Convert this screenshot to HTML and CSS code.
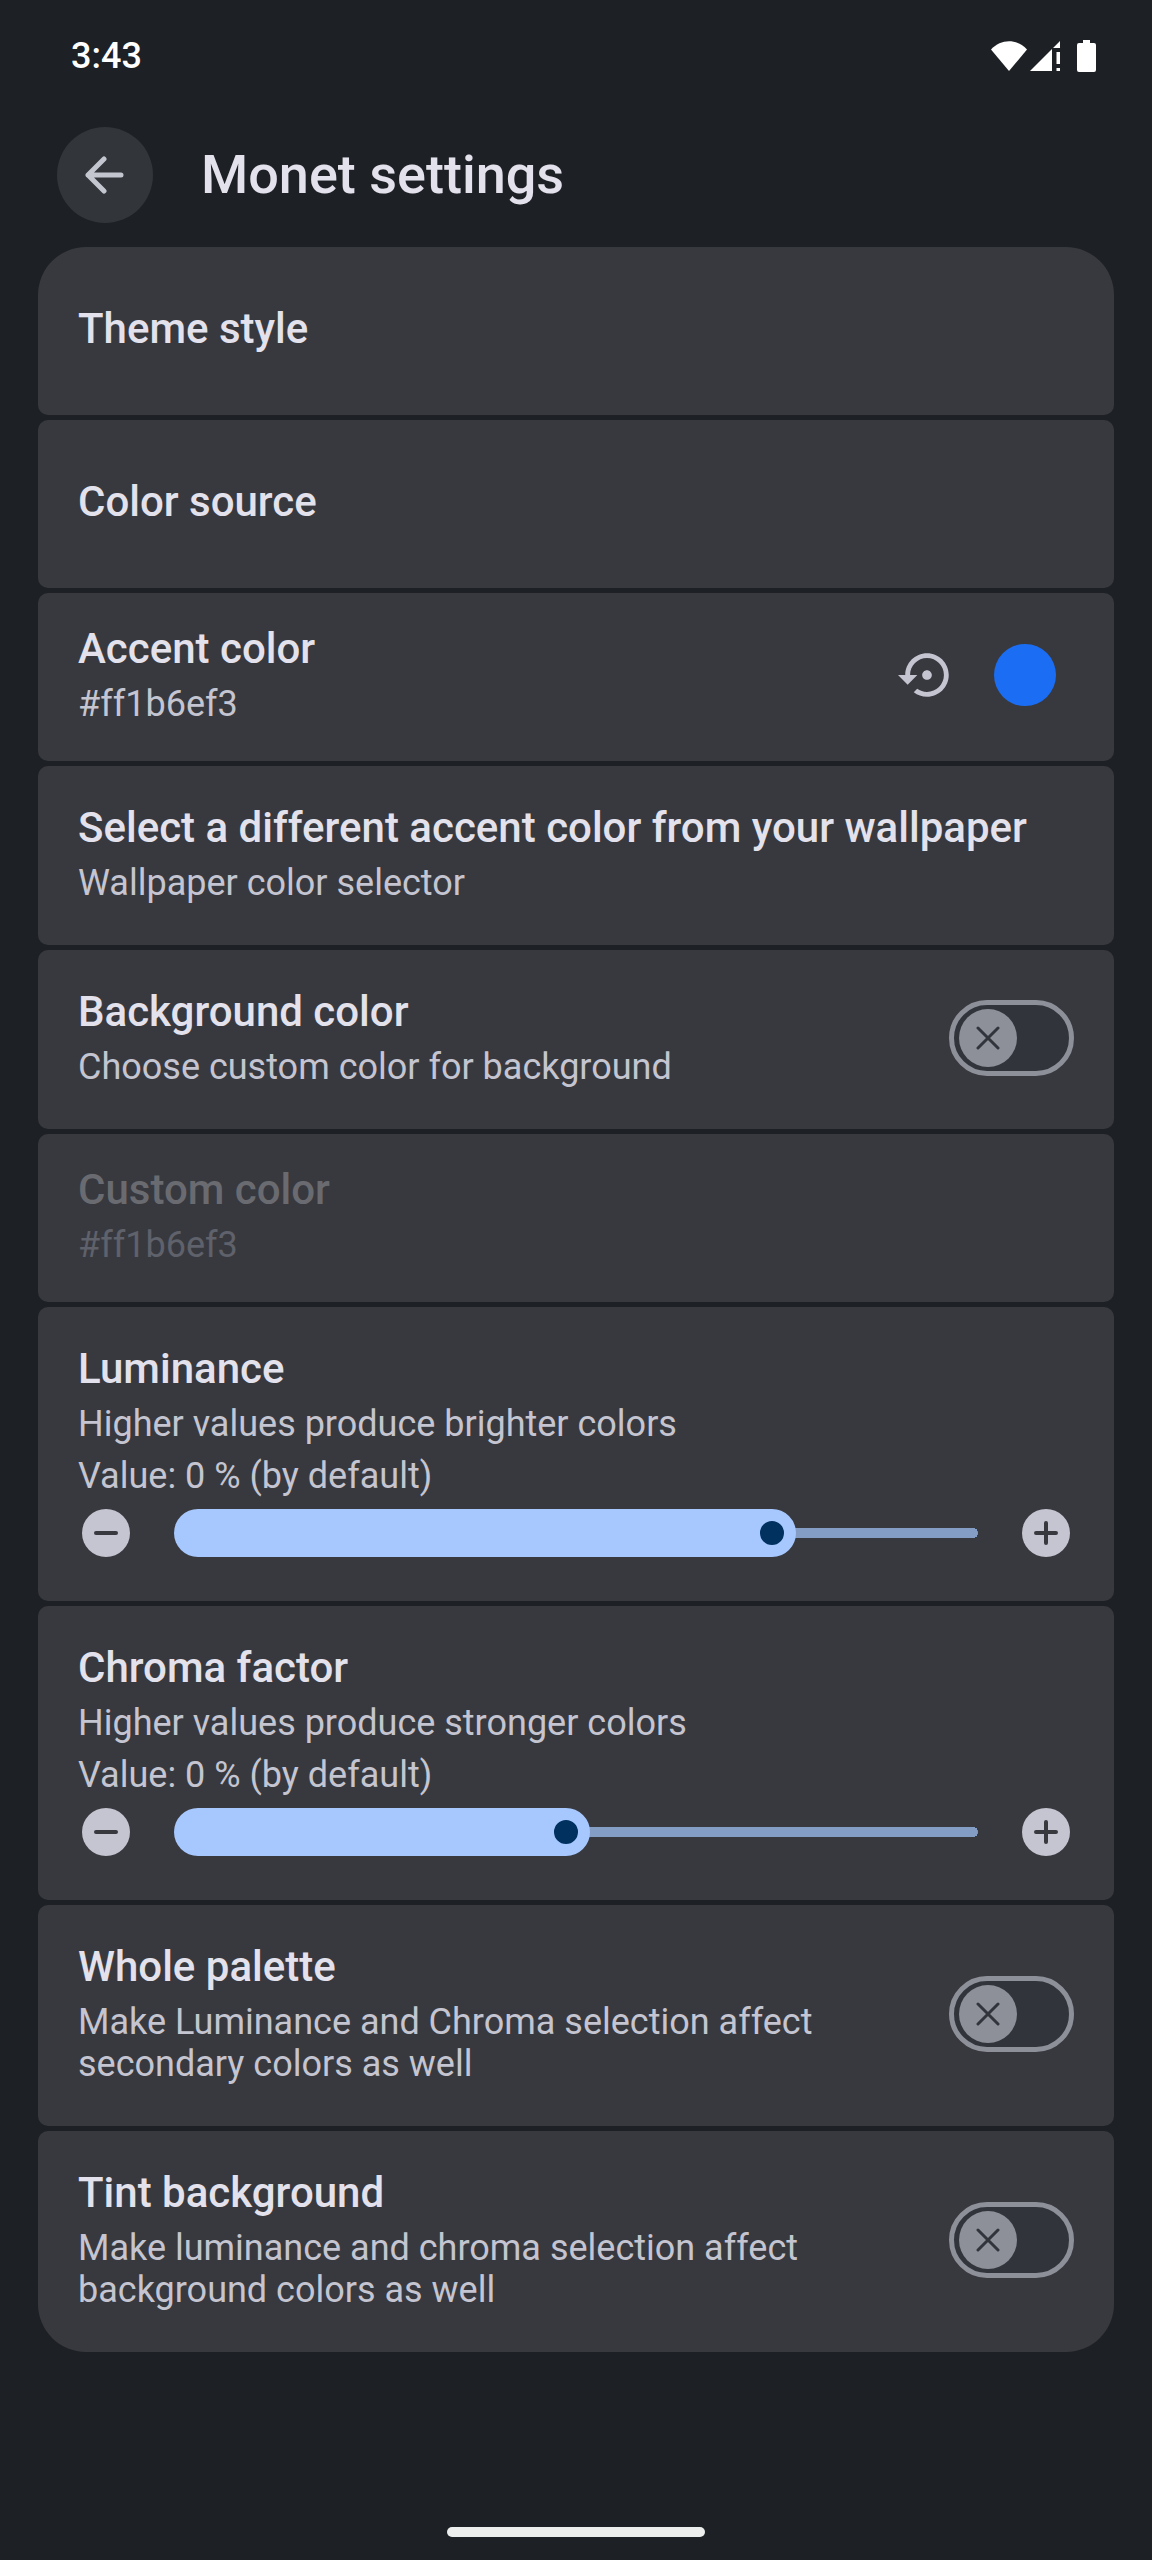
FILE: index.html
```html
<!DOCTYPE html>
<html lang="en">
<head>
<meta charset="utf-8">
<meta name="viewport" content="width=device-width, initial-scale=1">
<title>Monet settings</title>
<link rel="stylesheet" href="styles.css">
</head>
<body>
<div class="screen">
  <div class="status-bar">
    <time class="clock">3:43</time>
    <div class="status-icons">
      <svg width="36" height="30" viewBox="0 0 36 30" aria-hidden="true"><path d="M0 8.500C10-2.500 26-2.500 36 8.500L18 30Z"/></svg>
      <svg class="signal" width="30" height="30" viewBox="0 0 30 30" aria-hidden="true"><path d="M0 30L22 8V30ZM23 7L30 0V7ZM26.500 11H30V23H26.500ZM26.500 27H30V30H26.500Z"/></svg>
      <svg width="19" height="32" viewBox="0 0 19 32" aria-hidden="true"><path d="M6 0H13V3H17Q19 3 19 5V30Q19 32 17 32H2Q0 32 0 30V5Q0 3 2 3H6Z"/></svg>
    </div>
  </div>

  <header class="app-bar">
    <button class="back" type="button" aria-label="Back">
      <svg width="40" height="38" viewBox="0 0 40 38" aria-hidden="true"><path d="M19 3L3 19L19 35M3 19H36"/></svg>
    </button>
    <h1 class="page-title">Monet settings</h1>
  </header>

  <main class="settings">
    <section class="card single">
      <h2 class="title">Theme style</h2>
    </section>

    <section class="card single">
      <h2 class="title">Color source</h2>
    </section>

    <section class="card compact">
      <div class="text">
        <h2 class="title">Accent color</h2>
        <p class="summary">#ff1b6ef3</p>
      </div>
      <div class="color-tools">
        <button class="reset" type="button" aria-label="Reset accent color">
          <svg width="58" height="58" viewBox="0 0 24 24" aria-hidden="true"><path d="M14 12c0-1.100-.9-2-2-2s-2 .9-2 2 .9 2 2 2 2-.9 2-2zm-2-9c-4.970 0-9 4.030-9 9H0l4 4 4-4H5c0-3.870 3.130-7 7-7s7 3.130 7 7-3.130 7-7 7c-1.510 0-2.910-.49-4.060-1.300l-1.420 1.440C8.040 20.300 9.940 21 12 21c4.970 0 9-4.030 9-9s-4.030-9-9-9z"/></svg>
        </button>
        <button class="swatch" type="button" aria-label="Pick accent color"></button>
      </div>
    </section>

    <section class="card">
      <div class="text">
        <h2 class="title">Select a different accent color from your wallpaper</h2>
        <p class="summary">Wallpaper color selector</p>
      </div>
    </section>

    <section class="card">
      <label class="text" for="background-color">
        <span class="title">Background color</span>
        <span class="summary">Choose custom color for background</span>
      </label>
      <span class="switch">
        <input class="switch-input" type="checkbox" role="switch" id="background-color">
        <span class="thumb"><svg width="24" height="24" viewBox="0 0 24 24" aria-hidden="true"><path d="M2 2L22 22M22 2L2 22"/></svg></span>
      </span>
    </section>

    <section class="card compact disabled">
      <div class="text">
        <h2 class="title">Custom color</h2>
        <p class="summary">#ff1b6ef3</p>
      </div>
    </section>

    <section class="card slider-card">
      <label class="text" for="luminance">
        <span class="title">Luminance</span>
        <span class="summary">Higher values produce brighter colors</span>
        <span class="summary">Value: 0 % (by default)</span>
      </label>
      <div class="slider-row">
        <button class="step" type="button" aria-label="Decrease luminance"><svg width="26" height="26" viewBox="0 0 26 26" aria-hidden="true"><path d="M3 13H23"/></svg></button>
        <input class="slider" type="range" id="luminance" min="0" max="1000" value="759" style="--position: 0.759">
        <button class="step" type="button" aria-label="Increase luminance"><svg width="26" height="26" viewBox="0 0 26 26" aria-hidden="true"><path d="M3 13H23M13 3V23"/></svg></button>
      </div>
    </section>

    <section class="card slider-card">
      <label class="text" for="chroma">
        <span class="title">Chroma factor</span>
        <span class="summary">Higher values produce stronger colors</span>
        <span class="summary">Value: 0 % (by default)</span>
      </label>
      <div class="slider-row">
        <button class="step" type="button" aria-label="Decrease chroma"><svg width="26" height="26" viewBox="0 0 26 26" aria-hidden="true"><path d="M3 13H23"/></svg></button>
        <input class="slider" type="range" id="chroma" min="0" max="1000" value="487" style="--position: 0.487">
        <button class="step" type="button" aria-label="Increase chroma"><svg width="26" height="26" viewBox="0 0 26 26" aria-hidden="true"><path d="M3 13H23M13 3V23"/></svg></button>
      </div>
    </section>

    <section class="card">
      <label class="text" for="whole-palette">
        <span class="title">Whole palette</span>
        <span class="summary">Make Luminance and Chroma selection affect secondary colors as well</span>
      </label>
      <span class="switch">
        <input class="switch-input" type="checkbox" role="switch" id="whole-palette">
        <span class="thumb"><svg width="24" height="24" viewBox="0 0 24 24" aria-hidden="true"><path d="M2 2L22 22M22 2L2 22"/></svg></span>
      </span>
    </section>

    <section class="card">
      <label class="text" for="tint-background">
        <span class="title">Tint background</span>
        <span class="summary">Make luminance and chroma selection affect background colors as well</span>
      </label>
      <span class="switch">
        <input class="switch-input" type="checkbox" role="switch" id="tint-background">
        <span class="thumb"><svg width="24" height="24" viewBox="0 0 24 24" aria-hidden="true"><path d="M2 2L22 22M22 2L2 22"/></svg></span>
      </span>
    </section>
  </main>

  <div class="home-bar"></div>
</div>
</body>
</html>
```
FILE: styles.css
```css
:root {
  --bg: #1d2025;
  --card: #38393f;
  --text: #e3e2ec;
  --muted: #c4c5d0;
  --outline: #8e9099;
  --accent: #a6c8ff;
  --track: #839dc5;
}

* {
  box-sizing: border-box;
}

body {
  margin: 0;
  background: var(--bg);
  color: var(--text);
  font-family: Roboto, "Liberation Sans", sans-serif;
}

h1, h2, p {
  margin: 0;
}

button {
  display: grid;
  place-items: center;
  padding: 0;
  border: 0;
  flex: none;
}

svg {
  display: block;
}

.screen {
  display: flex;
  flex-direction: column;
  min-height: 100vh;
  padding: 0 38px 23px;
}

.status-bar {
  display: flex;
  justify-content: space-between;
  padding: 35px 18px 0 33px;
}

.clock {
  color: #fff;
  font-size: 36px;
  font-weight: 500;
  line-height: 42px;
}

.status-icons {
  display: flex;
  align-items: center;
  gap: 3px;
  fill: #fff;
}

.signal {
  margin-right: 14px;
}

.app-bar {
  display: flex;
  align-items: center;
  gap: 48px;
  padding: 50px 19px 24px;
}

.back {
  width: 96px;
  height: 96px;
  border-radius: 50%;
  background: #32353a;
}

.back svg {
  fill: none;
  stroke: #c4c6cf;
  stroke-width: 5;
  stroke-linecap: round;
  stroke-linejoin: round;
}

.page-title {
  font-size: 54px;
  font-weight: 500;
  line-height: 64px;
}

.settings {
  display: flex;
  flex-direction: column;
  gap: 5px;
}

.card {
  display: flex;
  align-items: center;
  justify-content: space-between;
  gap: 40px;
  padding: 38px 40px 41px;
  border-radius: 10px;
  background: var(--card);
}

.card:first-child {
  border-top-left-radius: 48px;
  border-top-right-radius: 48px;
}

.card:last-child {
  border-bottom-left-radius: 48px;
  border-bottom-right-radius: 48px;
}

.single {
  padding: 58px 40px 62px;
}

.compact {
  padding: 32px 40px 36px;
}

.slider-card {
  flex-direction: column;
  align-items: stretch;
  gap: 12px;
  padding-bottom: 44px;
}

.text {
  display: flex;
  flex-direction: column;
  gap: 10px;
}

.title {
  font-size: 42px;
  font-weight: 500;
  line-height: 48px;
}

.summary {
  color: var(--muted);
  font-size: 36px;
  line-height: 42px;
}

.disabled .title {
  color: #6a6b70;
}

.disabled .summary {
  color: #5f616b;
}

.color-tools {
  display: flex;
  align-items: center;
  gap: 38px;
  padding-right: 18px;
}

.reset {
  background: none;
  fill: var(--muted);
}

.swatch {
  width: 62px;
  height: 62px;
  border-radius: 50%;
  background: #1b6ef3;
}

.switch {
  display: grid;
  align-items: center;
  flex: none;
}

.switch-input {
  grid-area: 1 / 1;
  width: 125px;
  height: 76px;
  margin: 0;
  appearance: none;
  border: 5px solid var(--outline);
  border-radius: 38px;
  background: #31353b;
}

.thumb {
  display: grid;
  grid-area: 1 / 1;
  place-items: center;
  width: 58px;
  height: 58px;
  margin-left: 10px;
  border-radius: 50%;
  background: var(--outline);
  pointer-events: none;
}

.thumb svg {
  fill: none;
  stroke: #31353b;
  stroke-width: 3;
  stroke-linecap: round;
}

.slider-row {
  display: flex;
  align-items: center;
  gap: 44px;
  padding: 0 4px;
}

.step {
  width: 48px;
  height: 48px;
  border-radius: 50%;
  background: var(--muted);
}

.step svg {
  fill: none;
  stroke: var(--card);
  stroke-width: 4;
  stroke-linecap: round;
}

.slider {
  flex: 1;
  min-width: 0;
  height: 48px;
  margin: 0;
  appearance: none;
  background: none;
}

/* Filled part, thin remainder, and the round cap at its right end */
.slider::-webkit-slider-runnable-track {
  height: 48px;
  border-radius: 24px;
  background:
    linear-gradient(var(--accent), var(--accent)) left center / calc(24px + (100% - 48px) * var(--position)) 48px no-repeat,
    linear-gradient(var(--track), var(--track)) left center / calc(100% - 5px) 10px no-repeat,
    radial-gradient(circle, var(--track) 5px, transparent 5px) right center / 10px 10px no-repeat;
}

.slider::-webkit-slider-thumb {
  width: 48px;
  height: 48px;
  appearance: none;
  border: 12px solid var(--accent);
  border-radius: 50%;
  background: #00315f;
}

.home-bar {
  width: 258px;
  height: 10px;
  margin: auto auto 0;
  border-radius: 5px;
  background: #eceeed;
}
```
